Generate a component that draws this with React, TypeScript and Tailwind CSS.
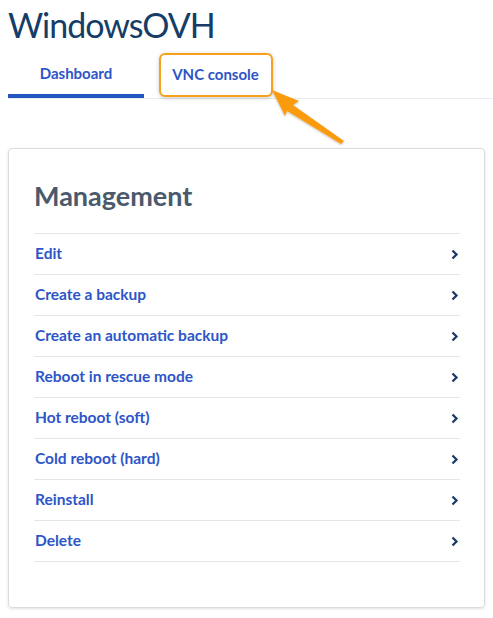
const actions = [
  'Edit',
  'Create a backup',
  'Create an automatic backup',
  'Reboot in rescue mode',
  'Hot reboot (soft)',
  'Cold reboot (hard)',
  'Reinstall',
  'Delete',
]

function Chevron() {
  return (
    <svg width="8" height="11" viewBox="0 0 8 11" className="text-[#1c3c68]">
      <polyline points="1.5,1.5 5.5,5.5 1.5,9.5" fill="none" stroke="currentColor" strokeWidth="2.3" />
    </svg>
  )
}

export default function App() {
  return (
    <div className="relative w-[493px] h-[618px] bg-white overflow-hidden font-['Lato',sans-serif]">
      {/* Title */}
      <h1 className="pl-2 pt-[5px] text-[34px] leading-[40px] text-[#153d68] font-normal tracking-[-1px]">
        WindowsOVH
      </h1>

      {/* Tabs */}
      <div className="mt-[3px] ml-2 flex border-b border-[#e6ebf0]">
        <div className="w-[136px] h-[50px] flex items-center justify-center border-b-[4px] border-[#2456c0] mb-[-1px]">
          <span className="text-[15px] font-bold text-[#2d55c7] pt-[4px]">Dashboard</span>
        </div>
        <div className="relative w-[130px] h-[50px] flex items-center justify-center">
          <span className="text-[15px] font-bold text-[#2d55c7] pt-[2px] pl-[13px]">VNC console</span>
          {/* Highlight box */}
          <div className="absolute left-[15px] top-[5px] w-[114px] h-[44px] rounded-[6px] border-2 border-[#f7a11a] shadow-[0_1px_4px_rgba(0,0,0,0.2)]" />
        </div>
      </div>

      {/* Arrow annotation */}
      <svg className="absolute left-[260px] top-[84px]" width="100" height="70" viewBox="0 0 100 70">
        <defs>
          <filter id="sh" x="-20%" y="-20%" width="140%" height="140%">
            <feDropShadow dx="0" dy="1" stdDeviation="1.2" floodColor="#000" floodOpacity="0.25" />
          </filter>
        </defs>
        <polygon
          points="12,6 39,17 33,21 84,57 81,60 27,27 25,32"
          fill="#f99b0d"
          filter="url(#sh)"
        />
      </svg>

      {/* Management card */}
      <div className="mx-2 mt-[49px] h-[460px] rounded-[4px] border border-[#dcdcdc] shadow-[0_1px_3px_rgba(0,0,0,0.12)] pl-[25px] pr-[24px] pt-[29px]">
        <h2 className="text-[27px] leading-[36px] font-bold text-[#4a5a6c]">Management</h2>
        <ul className="mt-[19px] border-t border-[#e6e6e6]">
          {actions.map((label) => (
            <li
              key={label}
              className="h-[41px] flex items-center justify-between border-b border-[#e6e6e6] pl-px pr-[1px]"
            >
              <span className="text-[15.5px] font-bold text-[#2d55c7]">{label}</span>
              <Chevron />
            </li>
          ))}
        </ul>
      </div>
    </div>
  )
}
